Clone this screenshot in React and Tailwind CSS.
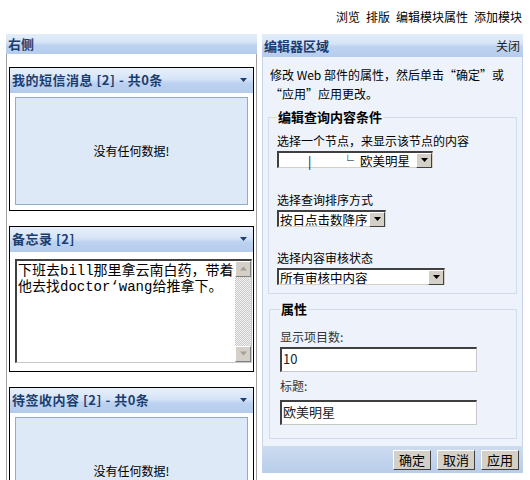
import React from 'react';

const font = "font-['Noto_Sans_CJK_SC','Noto_Sans',sans-serif]";

function DownTri({ className = '' }) {
  return (
    <svg width="7" height="4" viewBox="0 0 7 4" className={className}>
      <path d="M0 0h7L3.5 4z" fill="currentColor" />
    </svg>
  );
}

// 经典 Windows 风格的下拉按钮
function DropButton() {
  return (
    <div className="w-[16px] h-[15px] bg-[#d4d0c8] border border-t-white border-l-white border-b-[#404040] border-r-[#404040] flex items-center justify-center shrink-0 text-black">
      <DownTri />
    </div>
  );
}

function Select({ width, children }) {
  return (
    <div
      className={`${width} h-[17px] bg-white border-t-2 border-l-2 border-b border-r border-t-[#404040] border-l-[#404040] border-b-[#d4d0c8] border-r-[#d4d0c8] flex items-center justify-between text-[12.5px] leading-[15px] text-black`}
    >
      <div className="pl-[1px] flex items-center whitespace-nowrap">{children}</div>
      <DropButton />
    </div>
  );
}

function TextInput({ value }) {
  return (
    <div className="w-[197px] h-[25px] bg-white border-t-2 border-l-2 border-b border-r border-t-[#404040] border-l-[#404040] border-b-[#c8c8c8] border-r-[#c8c8c8] text-[13px] leading-[18px] px-[1px] pt-[1px] text-[#222]">
      {value}
    </div>
  );
}

function ModuleHeader({ title }) {
  return (
    <div className="h-[25px] bg-[linear-gradient(to_bottom,#e8f0fb,#d6e4f7_45%,#bcd2f0_60%,#b4cbec)] flex items-center justify-between pl-[2px] pr-[6px]">
      <span className="text-[13px] font-bold text-[#1b3d70] tracking-[0.5px]">{title}</span>
      <DownTri className="text-[#1b3d70]" />
    </div>
  );
}

function EmptyBox() {
  return (
    <div className="h-[108px] bg-[#dde9f7] border border-[#91abcf] flex items-center justify-center text-[12px] text-black">
      没有任何数据!
    </div>
  );
}

function ScrollArrow({ up }) {
  return (
    <div className="w-[16px] h-[16px] bg-[#d4d0c8] border border-t-white border-l-white border-b-[#808080] border-r-[#808080] flex items-center justify-center">
      <svg width="7" height="5" viewBox="0 0 7 5">
        {up ? (
          <path d="M0 4.5h7L3.5 0.5z" fill="#a0a0a0" />
        ) : (
          <path d="M0 0.5h7L3.5 4.5z" fill="#a0a0a0" />
        )}
      </svg>
    </div>
  );
}

function Btn({ children }) {
  return (
    <div className="h-[20px] px-[5px] bg-[#d4d0c8] border border-t-white border-l-white border-b-[#404040] border-r-[#404040] flex items-center text-[13px] text-black leading-none">
      {children}
    </div>
  );
}

export default function App() {
  return (
    <div className={`w-[530px] h-[480px] bg-white overflow-hidden ${font}`}>
      {/* 顶部操作链接 */}
      <div className="h-[34px] flex justify-end items-start gap-[6px] pt-[9px] pr-[8px] text-[12px] leading-[16px] text-black">
        <span>浏览</span>
        <span>排版</span>
        <span>编辑模块属性</span>
        <span>添加模块</span>
      </div>

      <div className="flex pl-[6px]">
        {/* 左侧区域 */}
        <div className="w-[251px] h-[446px] border-x border-[#a0a0a0] flex flex-col">
          <div className="h-[23px] -mx-[1px] bg-[linear-gradient(to_bottom,#e4edf9,#d8e5f7_40%,#bed3f0_55%,#b6ccee)] flex items-center pl-[2px]">
            <span className="text-[13px] font-bold text-[#1b3d70]">右侧</span>
          </div>
          <div className="px-[2px] pt-[13px] flex flex-col gap-[15px]">
            <div className="border border-black">
              <ModuleHeader title="我的短信消息 [2] - 共0条" />
              <div className="px-[5px] pt-[4px] pb-[5px]">
                <EmptyBox />
              </div>
            </div>

            <div className="border border-black">
              <ModuleHeader title="备忘录 [2]" />
              <div className="pl-[5px] pr-[1px] pt-[7px] pb-[8px]">
                <div className="h-[104px] flex bg-white border-t-2 border-l-2 border-b border-r border-t-[#404040] border-l-[#404040] border-b-[#c8c8c8] border-r-[#c8c8c8]">
                  <div className="flex-1 pl-[1px] pt-[2px] text-[14px] leading-[16px] text-black font-['Liberation_Mono','Noto_Sans_CJK_SC',monospace] whitespace-nowrap">
                    <div>下班去bill那里拿云南白药，带着</div>
                    <div>他去找doctor‘wang给推拿下。</div>
                  </div>
                  <div className="w-[16px] flex flex-col bg-[repeating-conic-gradient(#c8c8c8_0_25%,#f4f4f4_0_50%)] bg-[length:2px_2px]">
                    <ScrollArrow up />
                    <div className="flex-1" />
                    <ScrollArrow />
                  </div>
                </div>
              </div>
            </div>

            <div className="border border-black">
              <ModuleHeader title="待签收内容 [2] - 共0条" />
              <div className="px-[5px] pt-[4px] pb-[5px]">
                <EmptyBox />
              </div>
            </div>
          </div>
        </div>

        {/* 编辑器区域 */}
        <div className="ml-[5px] w-[261px] h-[439px] border-x border-[#c8d5e8] bg-[#eef3fb] flex flex-col">
          <div className="h-[23px] -mx-[1px] bg-[linear-gradient(to_bottom,#e4edf9,#d8e5f7_40%,#bed3f0_55%,#b6ccee)] flex items-center justify-between pl-[2px] pr-[3px]">
            <span className="text-[13px] font-bold text-[#1b3d70]">编辑器区域</span>
            <span className="text-[12px] text-[#222]">关闭</span>
          </div>

          <div className="flex-1 px-[5px] pt-[8px]">
            <div className="pl-[2px] text-[12px] leading-[19px] text-black">
              <div>修改 Web 部件的属性，然后单击“确定”或</div>
              <div>“应用”应用更改。</div>
            </div>

            <fieldset className="mt-[6px] border border-[#d3dcea] px-[8px] pb-[8px]">
              <legend className="px-[1px] text-[13px] font-bold leading-[16px] text-black">编辑查询内容条件</legend>
              <div className="pt-[8px] text-[12px] leading-[16px] text-black">
                <div>选择一个节点，来显示该节点的内容</div>
                <div className="mt-[2px]">
                  <Select width="w-[156px]">
                    <span className="ml-[28px]">|</span>
                    <span className="ml-[30px]">└</span>
                    <span className="ml-[6px]">欧美明星</span>
                  </Select>
                </div>
                <div className="mt-[24px]">选择查询排序方式</div>
                <div className="mt-[2px]">
                  <Select width="w-[109px]">按日点击数降序</Select>
                </div>
                <div className="mt-[23px]">选择内容审核状态</div>
                <div className="mt-[2px]">
                  <Select width="w-[168px]">所有审核中内容</Select>
                </div>
              </div>
            </fieldset>

            <fieldset className="mt-[7px] ml-[1px] border border-[#d3dcea] px-[10px] pb-[13px]">
              <legend className="px-[1px] text-[13px] font-bold leading-[16px] text-black">属性</legend>
              <div className="pt-[12px] text-[12px] leading-[16px] text-[#333]">
                <div>显示项目数:</div>
                <div className="mt-[2px]">
                  <TextInput value="10" />
                </div>
                <div className="mt-[6px]">标题:</div>
                <div className="mt-[6px]">
                  <TextInput value="欧美明星" />
                </div>
              </div>
            </fieldset>
          </div>

          <div className="h-[27px] -mx-[1px] bg-[linear-gradient(to_bottom,#cddcf0,#b8cdea)] flex items-center justify-end gap-[6px] pr-[4px]">
            <Btn>确定</Btn>
            <Btn>取消</Btn>
            <Btn>应用</Btn>
          </div>
        </div>
      </div>
    </div>
  );
}
